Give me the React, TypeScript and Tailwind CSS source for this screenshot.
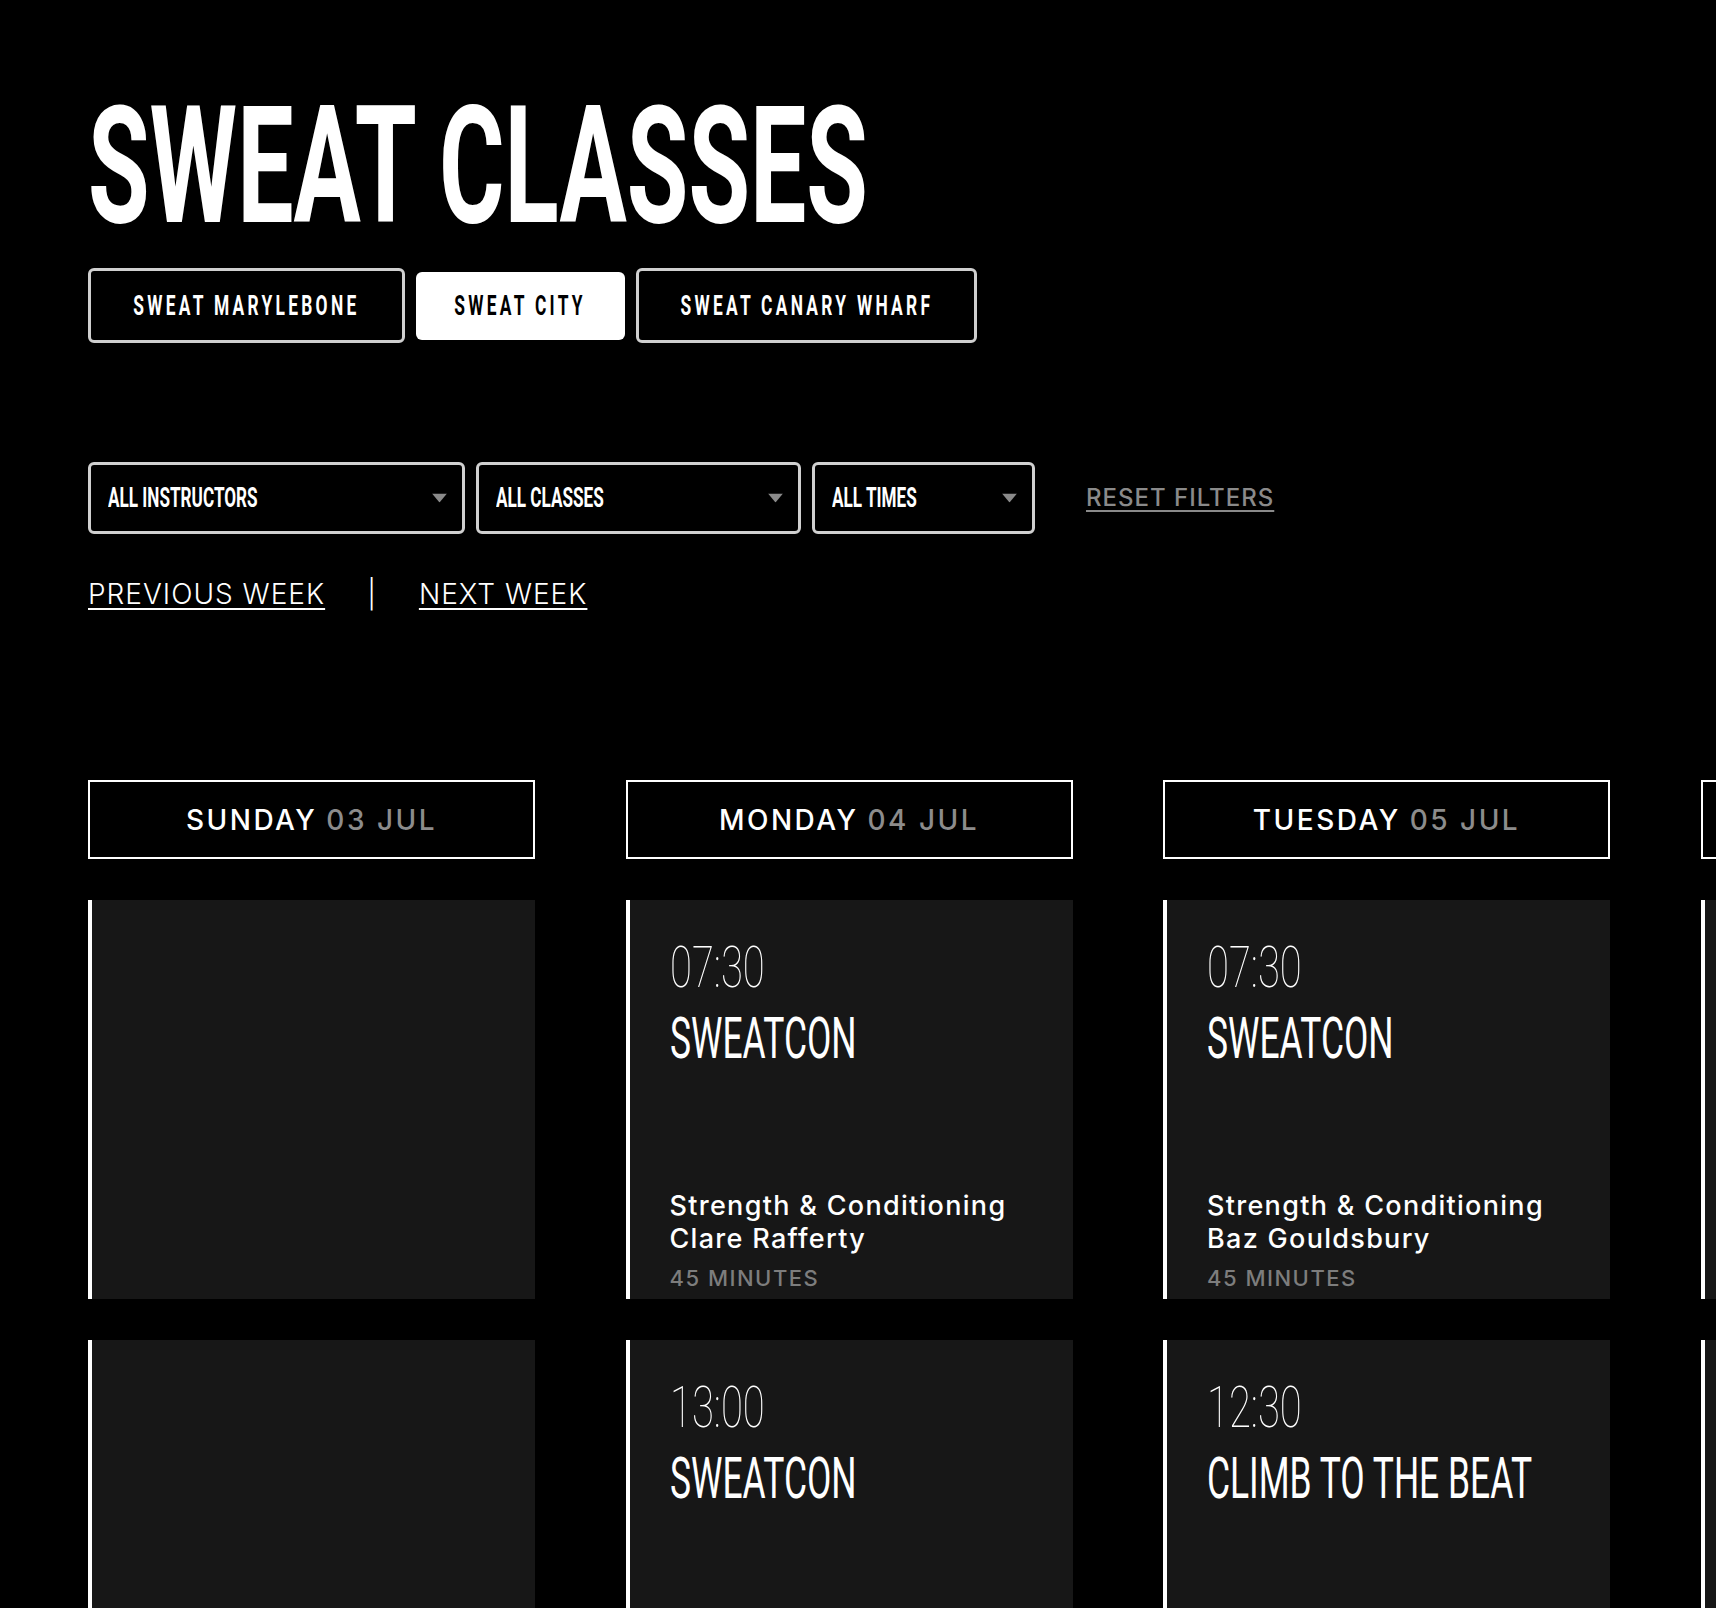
import React from "react";

type ClassItem = {
  time: string;
  name: string;
  type: string;
  instructor: string;
  duration: string;
} | null;

type Day = { day: string; date: string; classes: ClassItem[] };

const days: Day[] = [
  { day: "SUNDAY", date: "03 JUL", classes: [null, null] },
  {
    day: "MONDAY",
    date: "04 JUL",
    classes: [
      { time: "07:30", name: "SWEATCON", type: "Strength & Conditioning", instructor: "Clare Rafferty", duration: "45 MINUTES" },
      { time: "13:00", name: "SWEATCON", type: "Strength & Conditioning", instructor: "Clare Rafferty", duration: "45 MINUTES" },
    ],
  },
  {
    day: "TUESDAY",
    date: "05 JUL",
    classes: [
      { time: "07:30", name: "SWEATCON", type: "Strength & Conditioning", instructor: "Baz Gouldsbury", duration: "45 MINUTES" },
      { time: "12:30", name: "CLIMB TO THE BEAT", type: "Cardio", instructor: "Baz Gouldsbury", duration: "45 MINUTES" },
    ],
  },
  {
    day: "WEDNESDAY",
    date: "06 JUL",
    classes: [
      { time: "07:30", name: "SWEATCON", type: "Strength & Conditioning", instructor: "Clare Rafferty", duration: "45 MINUTES" },
      { time: "12:30", name: "SWEATCON", type: "Strength & Conditioning", instructor: "Clare Rafferty", duration: "45 MINUTES" },
    ],
  },
];

function Card({ item }: { item: ClassItem }) {
  return (
    <div className="flex h-[399px] flex-col border-l-4 border-white bg-[#171717] pl-[40px] pb-[7px]">
      {item && (
        <>
          <div className="pt-[38px]">
            <div className="whitespace-nowrap font-['Roboto',sans-serif] text-[58px] font-thin leading-none text-white">
              <span className="inline-block origin-left scale-x-[0.69]">{item.time}</span>
            </div>
            <div className="mt-[13px] whitespace-nowrap font-['Roboto',sans-serif] text-[58px] font-normal leading-none text-white">
              <span className="inline-block origin-left scale-x-[0.61]">{item.name}</span>
            </div>
          </div>
          <div className="mt-auto whitespace-nowrap font-['Inter',sans-serif]">
            <div className="text-[27px] font-medium leading-[33px] tracking-[1.3px] text-white">{item.type}</div>
            <div className="text-[27px] font-medium leading-[33px] tracking-[1.3px] text-white">{item.instructor}</div>
            <div className="mt-[9px] text-[22px] font-medium leading-[28px] tracking-[1.5px] text-[#7d7d7d]">
              {item.duration}
            </div>
          </div>
        </>
      )}
    </div>
  );
}

function Select({ label, width }: { label: string; width: string }) {
  return (
    <div
      className={`relative flex h-[72px] items-center rounded-[6px] border-[3px] border-[#d0d0d0] bg-black pl-[17px] ${width}`}
    >
      <span className="inline-block origin-left scale-x-[0.635] whitespace-nowrap font-['Roboto',sans-serif] text-[27px] font-bold leading-none text-white">
        {label}
      </span>
      <svg
        className="absolute right-[15px] top-1/2 -translate-y-1/2"
        width="15"
        height="9"
        viewBox="0 0 15 9"
      >
        <polygon points="0,0 15,0 7.5,9" fill="#8a8a8a" />
      </svg>
    </div>
  );
}

export default function App() {
  return (
    <div className="min-h-screen w-full overflow-hidden bg-black pl-[88px]">
      <h1 className="box-content h-[163px] pt-[85px] whitespace-nowrap font-['Roboto',sans-serif] text-[163px] font-bold leading-none text-white">
        <span className="inline-block origin-left scale-x-[0.614]">SWEAT CLASSES</span>
      </h1>

      <div className="mt-[20px] flex items-center gap-[11px]">
        <button className="flex h-[75px] w-[317px] items-center justify-center rounded-[6px] border-[3px] border-[#cfcfcf] bg-black">
          <span className="inline-block scale-x-[0.62] whitespace-nowrap font-['Roboto',sans-serif] text-[28px] font-bold leading-none tracking-[5.3px] text-white">
            SWEAT MARYLEBONE
          </span>
        </button>
        <button className="flex h-[68px] w-[209px] items-center justify-center rounded-[6px] bg-white">
          <span className="inline-block scale-x-[0.62] whitespace-nowrap font-['Roboto',sans-serif] text-[28px] font-bold leading-none tracking-[5.3px] text-black">
            SWEAT CITY
          </span>
        </button>
        <button className="flex h-[75px] w-[341px] items-center justify-center rounded-[6px] border-[3px] border-[#cfcfcf] bg-black">
          <span className="inline-block scale-x-[0.62] whitespace-nowrap font-['Roboto',sans-serif] text-[28px] font-bold leading-none tracking-[5.3px] text-white">
            SWEAT CANARY WHARF
          </span>
        </button>
      </div>

      <div className="mt-[119px] flex items-center">
        <div className="flex gap-[11px]">
          <Select label="ALL INSTRUCTORS" width="w-[377px]" />
          <Select label="ALL CLASSES" width="w-[325px]" />
          <Select label="ALL TIMES" width="w-[223px]" />
        </div>
        <a className="ml-[51px] font-['Inter',sans-serif] text-[24px] font-medium leading-none tracking-[1px] text-[#8a8a8a] underline decoration-2 underline-offset-[4px]">
          RESET FILTERS
        </a>
      </div>

      <div className="mt-[40px] flex h-[40px] items-center font-['Inter',sans-serif] text-[28px] font-light tracking-[1px] text-white">
        <a className="underline decoration-2 underline-offset-[4px]">PREVIOUS WEEK</a>
        <span className="ml-[42px] mr-[42px]">|</span>
        <a className="underline decoration-2 underline-offset-[4px]">NEXT WEEK</a>
      </div>

      <div className="mt-[166px] flex gap-[90.5px]">
        {days.map((d) => (
          <div key={d.day} className="w-[447px] shrink-0">
            <div className="flex h-[79px] items-center justify-center whitespace-nowrap border-2 border-white font-['Inter',sans-serif] text-[28px] font-medium tracking-[2.5px]">
              <span className="text-white">{d.day}</span>
              <span className="ml-[9px] text-[#8c8c8c]">{d.date}</span>
            </div>
            <div className="mt-[41px] flex flex-col gap-[41px]">
              {d.classes.map((c, i) => (
                <Card key={i} item={c} />
              ))}
            </div>
          </div>
        ))}
      </div>
    </div>
  );
}
